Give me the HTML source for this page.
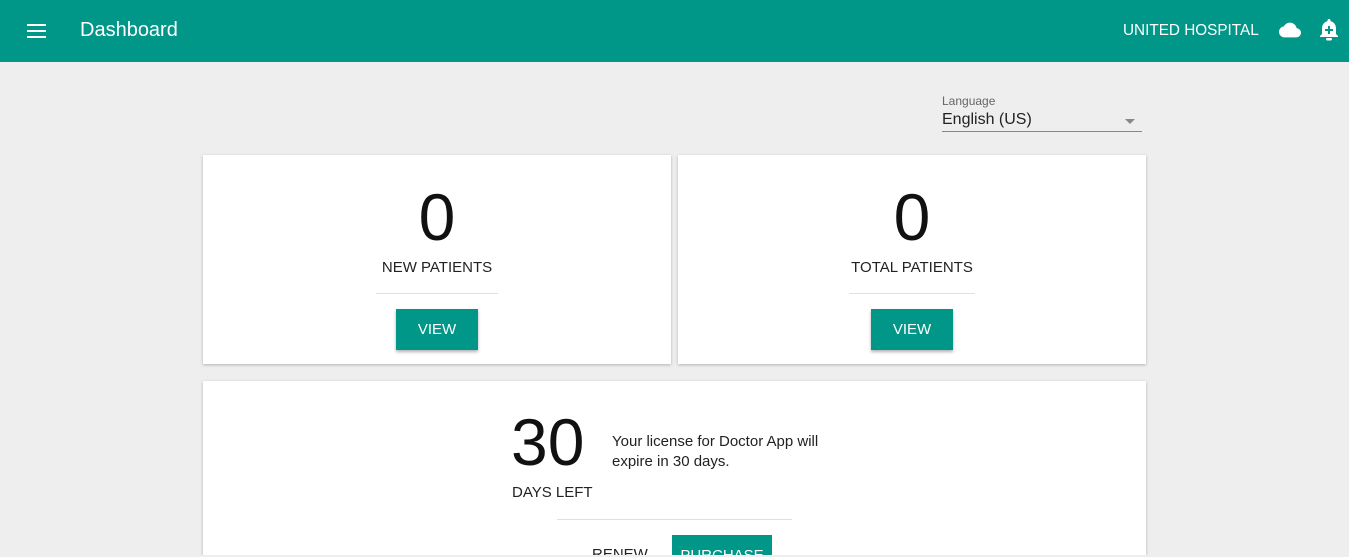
<!DOCTYPE html>
<html style="margin:0;width:1349px;height:557px;overflow:hidden"><head><style>
body{margin:0;width:1349px;height:557px;overflow:hidden;background:#eeeeee;font-family:"Liberation Sans",Roboto,sans-serif;position:relative}
.hdr{position:absolute;left:0;top:0;width:1349px;height:62px;background:#009688;color:#fff}
.card{position:absolute;background:#fff;box-shadow:0 1px 3px rgba(0,0,0,.25);text-align:center;overflow:hidden}
.big{font-size:66px;line-height:1;position:absolute;width:100%;color:#111}
.lbl{position:absolute;width:100%;font-size:15px;color:#222}
.hr{position:absolute;height:1px;background:#e0e0e0}
.btn{position:absolute;background:#009688;color:#fff;font-size:15px;box-shadow:0 2px 3px rgba(0,0,0,.3);text-align:center}
</style></head><body>
<div class="hdr">
 <div style="position:absolute;left:27px;top:24px;width:19px;height:2px;background:#fff;box-shadow:0 6px 0 #fff,0 12px 0 #fff"></div>
 <div style="position:absolute;left:80px;top:19px;font-size:20px">Dashboard</div>
 <div style="position:absolute;left:1123px;top:22px;font-size:15.3px">UNITED HOSPITAL</div>
 <svg style="position:absolute;left:1277px;top:19px" width="26" height="22" viewBox="0 0 24 24"><path fill="#fff" d="M19.35 10.04A7.49 7.49 0 0 0 12 4C9.11 4 6.6 5.64 5.35 8.04A5.994 5.994 0 0 0 0 14c0 3.31 2.69 6 6 6h13c2.76 0 5-2.24 5-5 0-2.64-2.05-4.78-4.65-4.96z"/></svg>
 <svg style="position:absolute;left:1318px;top:18px" width="22" height="24" viewBox="0 0 22 24"><path fill="#fff" d="M11 1a1.5 1.5 0 0 1 1.5 1.5v.6A7 7 0 0 1 18 10v6l2 2v1H2v-1l2-2v-6a7 7 0 0 1 5.5-6.9v-.6A1.5 1.5 0 0 1 11 1z"/><rect x="8" y="20" width="6" height="2.5" rx="1.2" fill="#fff"/><path d="M10 8h2v3h3v2h-3v3h-2v-3H7v-2h3z" fill="#009688"/></svg>
</div>
<div style="position:absolute;left:942px;top:94px;font-size:12px;color:#666">Language</div>
<div style="position:absolute;left:942px;top:111px;font-size:16px;color:#222">English (US)</div>
<div style="position:absolute;left:1125px;top:119px;width:0;height:0;border-left:5px solid transparent;border-right:5px solid transparent;border-top:5px solid #888"></div>
<div style="position:absolute;left:942px;top:131px;width:200px;height:1px;background:#888"></div>

<div class="card" style="left:203px;top:155px;width:468px;height:209px">
 <div class="big" style="top:29px">0</div>
 <div class="lbl" style="top:104px">NEW PATIENTS</div>
 <div class="hr" style="left:173px;top:138px;width:122px"></div>
 <div class="btn" style="left:193px;top:154px;width:82px;height:41px;line-height:41px">VIEW</div>
</div>
<div class="card" style="left:678px;top:155px;width:468px;height:209px">
 <div class="big" style="top:29px">0</div>
 <div class="lbl" style="top:104px">TOTAL PATIENTS</div>
 <div class="hr" style="left:171px;top:138px;width:126px"></div>
 <div class="btn" style="left:193px;top:154px;width:82px;height:41px;line-height:41px">VIEW</div>
</div>
<div class="card" style="left:203px;top:381px;width:943px;height:174px">
 <div class="big" style="left:308px;width:auto;top:28px">30</div>
 <div style="position:absolute;left:309px;top:103px;font-size:15px;color:#222">DAYS LEFT</div>
 <div style="position:absolute;left:409px;top:51px;font-size:15px;color:#222;text-align:left;line-height:20px">Your license for Doctor App will<br>expire in 30 days.</div>
 <div class="hr" style="left:354px;top:138px;width:235px"></div>
 <div style="position:absolute;left:389px;top:165px;font-size:15px;color:#222">RENEW</div>
 <div class="btn" style="left:469px;top:154px;width:100px;height:41px;line-height:41px;box-shadow:none">PURCHASE</div>
</div>
<div style="position:absolute;left:0;top:555px;width:1349px;height:2px;background:#eee"></div>
</body></html>
